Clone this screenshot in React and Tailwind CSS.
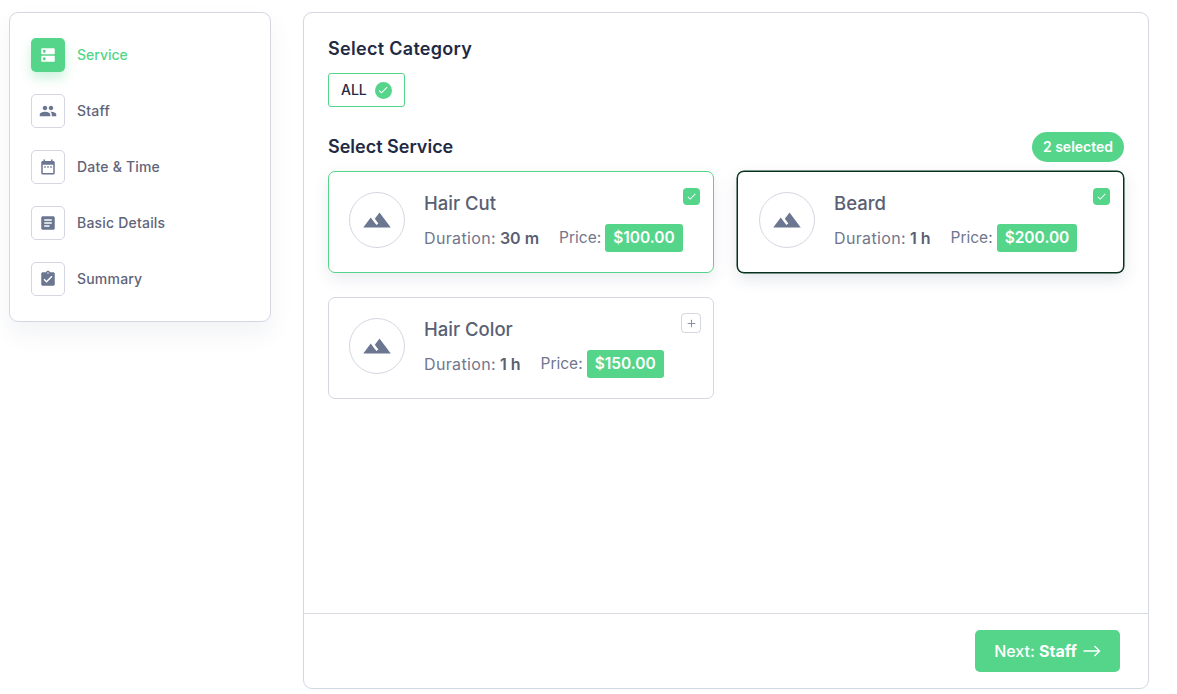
import React from 'react';
import {
  MdDns,
  MdPeople,
  MdDateRange,
  MdArticle,
  MdAssignmentTurnedIn,
  MdLandscape,
  MdCheck,
  MdAdd,
} from 'react-icons/md';

const steps = [
  { label: 'Service', icon: MdDns, active: true },
  { label: 'Staff', icon: MdPeople },
  { label: 'Date & Time', icon: MdDateRange },
  { label: 'Basic Details', icon: MdArticle },
  { label: 'Summary', icon: MdAssignmentTurnedIn },
];

const services = [
  { name: 'Hair Cut', duration: '30 m', price: '$100.00', state: 'selected' },
  { name: 'Beard', duration: '1 h', price: '$200.00', state: 'focused' },
  { name: 'Hair Color', duration: '1 h', price: '$150.00', state: 'idle' },
];

function StepItem({ label, icon: Icon, active }) {
  return (
    <li className="flex items-center gap-3">
      {active ? (
        <span className="flex h-[34px] w-[34px] items-center justify-center rounded-[5px] bg-[#54d58a] text-white shadow-[0_6px_12px_rgba(84,213,138,0.3)]">
          <Icon className="h-[18px] w-[18px]" />
        </span>
      ) : (
        <span className="flex h-[34px] w-[34px] items-center justify-center rounded-[5px] border border-[#d4d6e2] text-[#6b7690]">
          <Icon className="h-[18px] w-[18px]" />
        </span>
      )}
      <span
        className={
          active
            ? 'text-sm font-medium text-[#54d58a]'
            : 'text-sm font-medium tracking-[0.2px] text-[#5f6479]'
        }
      >
        {label}
      </span>
    </li>
  );
}

function ServiceCard({ name, duration, price, state }) {
  const border =
    state === 'selected'
      ? 'border-[#54d58a] pl-5 shadow-[0_6px_16px_rgba(60,70,110,0.1)]'
      : state === 'focused'
        ? 'border-[#04301c] pl-[21px] shadow-[0_0_0_0.5px_#04301c,0_6px_16px_rgba(60,70,110,0.14)]'
        : 'border-[#d4d6e2] pl-5';

  return (
    <div className={`relative flex h-[102px] items-center rounded-[7px] border bg-white ${border}`}>
      <span className="mb-1 flex h-14 w-14 items-center justify-center rounded-full border border-[#d4d6e2] text-[#6b7690]">
        <MdLandscape className="h-[30px] w-[30px]" />
      </span>
      <div className="mb-[2px] ml-[19px]">
        <h3 className="text-[18.5px] leading-[26px] font-medium text-[#5a5f74]">{name}</h3>
        <div className="mt-2 flex items-center text-[15.5px] text-[#71768d]">
          <span className="text-base tracking-[0.35px]">Duration:</span>
          <span className="ml-1 text-base font-semibold text-[#5a5f74]">{duration}</span>
          <span className="ml-5">Price:</span>
          <span className="ml-1 flex h-7 items-center rounded-[3px] bg-[#54d58a] px-2 font-semibold text-white">
            {price}
          </span>
        </div>
      </div>
      {state === 'idle' ? (
        <span className="absolute top-[15px] right-3 flex h-5 w-5 items-center justify-center rounded-[4px] border border-[#d4d6e2] text-[#8a8fa3]">
          <MdAdd className="h-[13px] w-[13px]" />
        </span>
      ) : (
        <span className="absolute top-4 right-[13px] flex h-[17px] w-[17px] items-center justify-center rounded-[4px] bg-[#54d58a] text-white">
          <MdCheck className="h-[11px] w-[11px]" />
        </span>
      )}
    </div>
  );
}

export default function App() {
  return (
    <div className="flex h-[694px] items-start gap-8 bg-white pt-3 pr-7 pb-[5px] pl-[9px] font-['Inter','Liberation_Sans',sans-serif]">
      {/* Steps */}
      <aside className="w-[262px] shrink-0 rounded-[9px] border border-[#d4d6e2] bg-white px-[21px] pt-[25px] pb-[25px] shadow-[0_12px_24px_rgba(70,80,130,0.07)]">
        <ul className="flex flex-col gap-[22px]">
          {steps.map((step) => (
            <StepItem key={step.label} {...step} />
          ))}
        </ul>
      </aside>

      {/* Main panel */}
      <main className="flex h-[677px] min-w-0 flex-1 flex-col rounded-[9px] border border-[#d4d6e2] bg-white">
        <div className="flex-1 px-6 pt-[23px]">
          <h2 className="text-lg leading-[26px] font-semibold tracking-[0.3px] text-[#1f2a44]">Select Category</h2>
          <div className="mt-[11px] inline-flex h-[34px] items-center gap-2 rounded-[3px] border border-[#54d58a] px-3 text-sm font-medium text-[#1f2a44]">
            ALL
            <span className="flex h-[17px] w-[17px] items-center justify-center rounded-full bg-[#54d58a] text-white">
              <MdCheck className="h-3 w-3" />
            </span>
          </div>
          <div className="mt-[25px] flex h-[30px] items-center justify-between">
            <h2 className="text-lg font-semibold text-[#1f2a44]">Select Service</h2>
            <span className="flex h-[30px] w-[92px] items-center justify-center rounded-full bg-[#54d58a] text-sm font-semibold text-white">
              2 selected
            </span>
          </div>
          <div className="mt-[9px] grid grid-cols-[386px_387px] gap-x-[23px] gap-y-6">
            {services.map((service) => (
              <ServiceCard key={service.name} {...service} />
            ))}
          </div>
        </div>
        <div className="flex h-[75px] items-start justify-end border-t border-[#d9dbe5] pt-4 pr-7">
          <button className="flex h-[42px] w-[145px] items-center justify-center gap-[6px] rounded-[5px] bg-[#54d58a] text-base font-medium text-white">
            <span>
              Next: <b className="font-bold">Staff</b>
            </span>
            <svg width="18" height="12" viewBox="0 0 18 12" fill="none" stroke="currentColor" strokeWidth="1.4">
              <path d="M0.5 6H16.5M11.5 1L16.5 6L11.5 11" />
            </svg>
          </button>
        </div>
      </main>
    </div>
  );
}
